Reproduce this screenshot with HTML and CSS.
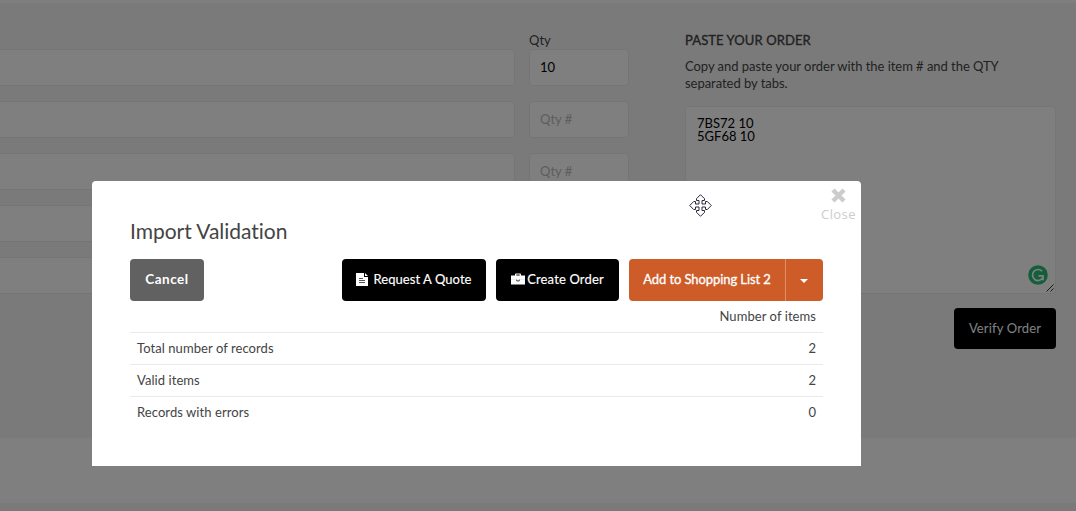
FILE: index.html
```html
<!DOCTYPE html>
<html lang="en">
<head>
<meta charset="utf-8">
<title>Import Validation</title>
<link rel="stylesheet" href="styles.css">
</head>
<body>
<main class="page">
  <section class="quick-order">
    <div class="items">
      <div class="item-head"><span class="qty-label">Qty</span></div>
      <div class="item-row"><div class="field field-item"></div><div class="field field-qty">10</div></div>
      <div class="item-row"><div class="field field-item"></div><div class="field field-qty placeholder">Qty #</div></div>
      <div class="item-row"><div class="field field-item"></div><div class="field field-qty placeholder">Qty #</div></div>
      <div class="item-row"><div class="field field-item"></div><div class="field field-qty"></div></div>
      <div class="item-row"><div class="field field-item"></div><div class="field field-qty"></div></div>
    </div>
    <div class="paste">
      <h2 class="paste-title">PASTE YOUR ORDER</h2>
      <p class="paste-help">Copy and paste your order with the item # and the QTY<br>separated by tabs.</p>
      <div class="paste-box">7BS72 10<br>5GF68 10
        <svg class="checker" width="20" height="20" viewBox="0 0 20 20"><circle cx="10" cy="10" r="9.8" fill="#2bbd78"/><path d="M14 6.200A5.500 5.500 0 1 0 15 12.400M10.500 10.900H15V15.300" fill="none" stroke="#fff" stroke-width="1.7"/></svg>
        <svg class="grip" width="8" height="8" viewBox="0 0 8 8"><path d="M.5 7.500l7-7M4.500 7.500l3-3" stroke="#333" stroke-width="1"/></svg>
      </div>
      <div class="paste-actions"><span class="btn btn-verify">Verify Order</span></div>
    </div>
  </section>
  <div class="spacer"></div>
  <footer class="footer"></footer>
</main>
<div class="overlay">
  <div class="modal">
    <div class="close">
      <svg width="17" height="15" viewBox="0 0 17 15"><path d="M3 2l11 11M14 2L3 13" stroke="#ccc" stroke-width="4.4"/></svg>
      <span class="close-text">Close</span>
    </div>
    <svg class="move" width="23" height="23" viewBox="0 0 23 23"><path d="M11.500.7L15.500 4.700V6.500H13V10H16.500V7.500H18.300L22.300 11.500L18.300 15.500H16.500V13H13V16.500H15.500V18.300L11.500 22.300L7.500 18.300V16.500H10V13H6.500V15.500H4.700L.7 11.500L4.700 7.500H6.500V10H10V6.500H7.500V4.700z" fill="#fff" stroke="#28283a" stroke-width="1"/></svg>
    <h1 class="title">Import Validation</h1>
    <div class="toolbar">
      <span class="btn btn-cancel">Cancel</span>
      <span class="btn btn-quote"><svg width="12" height="13" viewBox="0 0 12 13"><path d="M0 0h8v4h4v9H0zM9 0l3 3H9z" fill="#fff"/><path d="M3 5.500h4M3 7.500h6M3 9.500h6" stroke="#555"/></svg><span>Request A Quote</span></span>
      <span class="btn btn-create"><svg width="14" height="12" viewBox="0 0 14 12"><path d="M0 2.500h4V1.500Q4 .5 5 .5h4q1 0 1 1v1h4V11.500H0zM5.300 1.500v1h3.400v-1z" fill="#fff" fill-rule="evenodd"/><path d="M0 6.500h5M9 6.500h5" stroke="#eee"/><path d="M5 6.500h1l.5.700h1l.5-.700h1v1l-1 1H6l-1-1z" fill="#666"/></svg><span>Create Order</span></span>
      <span class="btn btn-list"><span class="list-text">Add to Shopping List 2</span><span class="list-toggle"><i class="caret"></i></span></span>
    </div>
    <table class="summary">
      <tr><td></td><td class="num">Number of items</td></tr>
      <tr><td>Total number of records</td><td class="num">2</td></tr>
      <tr><td>Valid items</td><td class="num">2</td></tr>
      <tr><td>Records with errors</td><td class="num">0</td></tr>
    </table>
  </div>
</div>
</body>
</html>
```
FILE: styles.css
```css
* { box-sizing: border-box; }
body { margin: 0; height: 511px; overflow: hidden; background: #fff; color: #444; font: 13px/17px Lato, "Liberation Sans", sans-serif; }
.page { padding-top: 3px; }
.quick-order { display: flex; height: 435px; background: #f5f5f5; }
.items { width: 629px; padding-top: 29px; }
.item-head { height: 17px; padding-left: 529px; }
.item-row { display: flex; gap: 14px; margin-bottom: 15px; }
.field { height: 37px; background: #fff; border: 1px solid #eaeaea; border-radius: 4px; }
.field-item { width: 515px; border-left: 0; border-radius: 0 4px 4px 0; }
.field-qty { width: 100px; padding: 9px 10px; color: #000; }
.field-qty.placeholder { color: #bbb; }
.paste { width: 371px; margin-left: 56px; padding-top: 29px; }
.paste-title { margin: 0; font-size: 13px; font-weight: 400; line-height: 17px; letter-spacing: .1px; -webkit-text-stroke: .35px #444; }
.paste-help { margin: 9px 0 14px; letter-spacing: -.04px; }
.paste-box { position: relative; height: 188px; padding: 10px 11px; background: #fff; border: 1px solid #eaeaea; border-radius: 4px; color: #000; line-height: 13px; }
.checker { position: absolute; right: 7px; bottom: 8px; }
.grip { position: absolute; right: 1px; bottom: 1px; }
.paste-actions { display: flex; justify-content: flex-end; margin-top: 14px; }
.btn { display: flex; align-items: center; justify-content: center; height: 42px; padding-bottom: 2px; border-radius: 4px; background: #000; color: #fff; white-space: nowrap; }
.btn-verify { width: 102px; height: 41px; padding-bottom: 0; letter-spacing: .15px; }
.spacer { height: 65px; }
.footer { height: 8px; background: #f5f5f5; }
.overlay { position: fixed; inset: 0; padding: 181px 0 0 92px; background: rgba(0, 0, 0, .5); }
.modal { position: relative; width: 769px; height: 285px; padding: 37px 38px 0; background: #fff; border-radius: 4px 4px 0 0; }
.close { position: absolute; top: 7px; right: 5px; width: 36px; display: flex; flex-direction: column; align-items: center; color: #ccc; font: 13px/17px "Open Sans", sans-serif; letter-spacing: .4px; }
.close-text { margin: 3px 0 0 1px; }
.move { position: absolute; left: 597px; top: 13px; }
.title { margin: 0; font-size: 21px; font-weight: 400; line-height: 26px; letter-spacing: -.03px; font-variant-ligatures: none; }
.toolbar { display: flex; margin-top: 15px; }
.btn-cancel { width: 74px; padding-bottom: 1px; background: #616161; font-weight: 700; font-size: 13.5px; letter-spacing: .5px; }
.btn-quote { width: 144px; margin-left: 138px; gap: 5px; letter-spacing: .06px; -webkit-text-stroke: .15px #fff; }
.btn-create { width: 123px; margin-left: 10px; gap: 2px; letter-spacing: .15px; -webkit-text-stroke: .15px #fff; }
.btn-list { width: 194px; margin-left: 10px; padding-bottom: 0; background: #cd5c29; }
.list-text { flex: 1; padding-bottom: 2px; text-align: center; letter-spacing: -.08px; -webkit-text-stroke: .3px #fff; }
.list-toggle { width: 38px; height: 42px; display: flex; align-items: center; justify-content: center; border-left: 1px solid #df8f6b; }
.caret { margin-top: 2px; margin-right: 1px; border: 4px solid transparent; border-top-color: #fff; border-bottom: 0; }
.summary { width: 693px; border-collapse: collapse; letter-spacing: .07px; }
.summary td { height: 32px; padding: 0 7px; border-top: 1px solid #eaeaea; }
.summary tr:first-child td { height: 31px; border-top: 0; }
.summary .num { text-align: right; }
```
